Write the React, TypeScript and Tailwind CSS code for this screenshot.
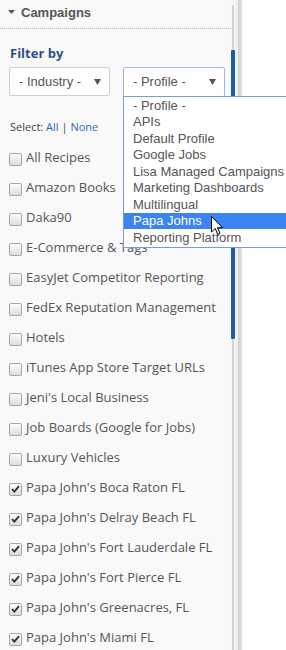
import React from "react";

const items: [string, boolean][] = [
  ["All Recipes", false],
  ["Amazon Books", false],
  ["Daka90", false],
  ["E-Commerce & Tags", false],
  ["EasyJet Competitor Reporting", false],
  ["FedEx Reputation Management", false],
  ["Hotels", false],
  ["iTunes App Store Target URLs", false],
  ["Jeni's Local Business", false],
  ["Job Boards (Google for Jobs)", false],
  ["Luxury Vehicles", false],
  ["Papa John's Boca Raton FL", true],
  ["Papa John's Delray Beach FL", true],
  ["Papa John's Fort Lauderdale FL", true],
  ["Papa John's Fort Pierce FL", true],
  ["Papa John's Greenacres, FL", true],
  ["Papa John's Miami FL", true],
];

const options = [
  "- Profile -",
  "APIs",
  "Default Profile",
  "Google Jobs",
  "Lisa Managed Campaigns",
  "Marketing Dashboards",
  "Multilingual",
  "Papa Johns",
  "Reporting Platform",
];

function Box({ checked }: { checked: boolean }) {
  return (
    <div className="w-[13px] h-[13px] shrink-0 rounded-[2px] border border-[#a6a6a6] bg-gradient-to-b from-[#fdfdfd] to-[#dcdcdc] flex items-center justify-center">
      {checked && (
        <svg width="9" height="8" viewBox="0 0 9 8">
          <path d="M1 4.2 L3.4 6.6 L8 1.2" fill="none" stroke="#333" strokeWidth="1.9" />
        </svg>
      )}
    </div>
  );
}

function Arrow() {
  return (
    <svg width="7" height="6" viewBox="0 0 7 6">
      <path d="M0 0 H7 L3.5 6 Z" fill="#555" />
    </svg>
  );
}

export default function App() {
  const sans = { fontFamily: '"Liberation Sans", Arial, sans-serif' };
  const open = { fontFamily: '"Open Sans", sans-serif' };
  return (
    <div className="relative w-[286px] h-[650px] overflow-hidden bg-white flex">
      <div className="w-[231px] h-full bg-[#f9f9f9] flex flex-col shrink-0 overflow-hidden">
        <div className="h-[29px] shrink-0 flex items-center border-b border-dotted border-[#b5b5b5] pl-[8px] pb-[4px] gap-[6px]" style={sans}>
          <svg width="7" height="4" viewBox="0 0 7 4">
            <path d="M0 0 H7 L3.5 4 Z" fill="#555" />
          </svg>
          <span className="text-[13px] font-bold text-[#555] leading-none">Campaigns</span>
        </div>
        <div className="shrink-0 pl-[10px] pt-[16px] text-[13px] font-bold text-[#2b4f8f] leading-[16px]" style={open}>
          Filter by
        </div>
        <div className="shrink-0 flex pl-[9px] mt-[6px] gap-[13px]" style={sans}>
          <div className="w-[101px] h-[29px] border border-[#cfcfcf] rounded-[2px] bg-white flex items-center justify-between pl-[9px] pr-[8px] text-[13px] text-[#555]">
            <span>- Industry -</span>
            <Arrow />
          </div>
          <div className="w-[102px] h-[30px] border border-[#9db6e6] rounded-[2px] bg-white flex items-center justify-between pl-[9px] pr-[8px] text-[13px] text-[#555]">
            <span>- Profile -</span>
            <Arrow />
          </div>
        </div>
        <div className="shrink-0 pl-[10px] mt-[23px] text-[11px] text-[#444] leading-[14px]" style={open}>
          Select: <span className="text-[#2a6ab8]">All</span> | <span className="text-[#2a6ab8]">None</span>
        </div>
        <div className="shrink-0 flex flex-col mt-[10px]" style={open}>
          {items.map(([label, checked]) => (
            <div key={label} className="h-[30px] flex items-center pl-[9px] gap-[4px] shrink-0">
              <Box checked={checked} />
              <span className="text-[13px] text-[#555] whitespace-nowrap leading-none -mt-[4px]">{label}</span>
            </div>
          ))}
        </div>
      </div>
      <div className="w-[4px] h-full flex flex-col items-center shrink-0 bg-[#f6f6f6]">
        <div className="h-[5px] shrink-0" />
        <div className="h-[45px] w-[2px] bg-[#d3d3d3] shrink-0" />
        <div className="h-[289px] w-[4px] bg-[#1f5ba5] rounded-[1px] shrink-0" />
        <div className="flex-1 w-[2px] bg-[#d3d3d3]" />
      </div>
      <div className="w-[3px] h-full bg-[#f0f0f0] shrink-0" />
      <div className="w-[4px] h-full bg-gradient-to-r from-[#cfcfcf] to-[#e2e2e2] shrink-0" />
      <div className="flex-1 h-full bg-white" />

      <div className="absolute left-[123px] top-[96px] w-[190px] border border-[#7b9bd2] bg-white flex flex-col pb-[1px]" style={sans}>
        {options.map((o) => (
          <div
            key={o}
            className={
              "h-[16.5px] pl-[9px] flex items-center text-[13px] whitespace-nowrap " +
              (o === "Papa Johns" ? "bg-[#3c84f4] text-white" : "text-[#555]")
            }
          >
            {o}
          </div>
        ))}
      </div>

      <svg className="absolute left-[211px] top-[216px]" width="13" height="20" viewBox="0 0 13 20">
        <path d="M0.5 0.5 L0.5 16 L4.2 12.5 L6.8 18.5 L9 17.5 L6.5 11.7 L11.5 11.7 Z" fill="white" stroke="black" strokeWidth="1" strokeLinejoin="round" />
      </svg>
    </div>
  );
}
